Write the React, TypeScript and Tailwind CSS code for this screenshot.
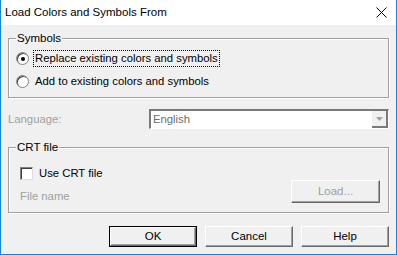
import React from "react"

const font = "font-['Liberation_Sans',Tahoma,sans-serif]"

function GroupBox({ label, className, children }: { label: string; className: string; children: React.ReactNode }) {
  return (
    <div className={`relative border border-[#a0a0a0] shadow-[inset_1px_1px_0_#fff,1px_1px_0_#fff] ${className}`}>
      <span className="absolute left-[7px] top-[-8px] bg-[#f0f0f0] px-[1px] text-[11.5px] leading-[14px] text-black">
        {label}
      </span>
      {children}
    </div>
  )
}

function Radio({ checked }: { checked?: boolean }) {
  return (
    <div className="flex h-[13px] w-[13px] items-center justify-center rounded-full border border-[#808080] bg-white shadow-[inset_1px_1px_0_#404040]">
      {checked && <div className="h-[4px] w-[4px] rounded-full bg-black" />}
    </div>
  )
}

function Button({ label, isDefault, disabled, className = "" }: { label: string; isDefault?: boolean; disabled?: boolean; className?: string }) {
  return (
    <div
      className={`flex items-center justify-center bg-[#f0f0f0] text-[11.5px] ${
        isDefault ? "border border-black" : ""
      } ${disabled ? "text-[#a0a0a0]" : "text-black"} ${className}`}
    >
      <div className="flex h-full w-full items-center justify-center border-t border-l border-t-white border-l-white border-b border-r border-b-[#696969] border-r-[#696969] shadow-[inset_-1px_-1px_0_#a0a0a0]">
        {label}
      </div>
    </div>
  )
}

export default function App() {
  return (
    <div className={`flex h-[255px] w-[397px] flex-col border-x border-b border-[#1883d7] bg-[#f0f0f0] ${font}`}>
      {/* Title bar */}
      <div className="flex h-[25px] items-center justify-between bg-white pl-[4px] pr-[9px]">
        <span className="text-[11.5px] text-black">Load Colors and Symbols From</span>
        <svg width="11" height="11" viewBox="0 0 11 11">
          <path d="M0.5 0.5 L10.5 10.5 M10.5 0.5 L0.5 10.5" stroke="#000" strokeWidth="1" />
        </svg>
      </div>

      <div className="flex flex-col px-[7px]">
        {/* Symbols */}
        <GroupBox label="Symbols" className="mt-[13px] h-[60px]">
          <div className="flex flex-col gap-[6px] pl-[7px] pt-[11px]">
            <div className="flex h-[17px] items-center">
              <Radio checked />
              <span className="ml-[4px] border border-dotted border-black px-[1px] text-[11.3px] leading-[15px] text-black">
                Replace existing colors and symbols
              </span>
            </div>
            <div className="flex h-[17px] items-center">
              <Radio />
              <span className="ml-[6px] text-[11.3px] text-black">Add to existing colors and symbols</span>
            </div>
          </div>
        </GroupBox>

        {/* Language */}
        <div className="mt-[11px] flex h-[20px] items-center">
          <span className="w-[141px] text-[11.3px] text-[#a0a0a0]">Language:</span>
          <div className="flex h-[20px] flex-1 border-t-2 border-l-2 border-t-[#7a7a7a] border-l-[#7a7a7a] border-b border-r border-b-white border-r-white bg-white">
            <span className="flex-1 pl-[2px] text-[11.3px] leading-[17px] text-[#6d6d6d]">English</span>
            <div className="flex w-[16px] items-center justify-center border-b-2 border-r-2 border-b-[#7a7a7a] border-r-[#7a7a7a] bg-[#f0f0f0]">
              <svg width="7" height="4" viewBox="0 0 7 4">
                <path d="M0 0 H7 L3.5 4 Z" fill="#a0a0a0" />
              </svg>
            </div>
          </div>
        </div>

        {/* CRT file */}
        <GroupBox label="CRT file" className="mt-[18px] h-[66px]">
          <div className="flex flex-col pl-[11px] pr-[8px] pt-[19px]">
            <div className="flex h-[13px] items-center">
              <div className="h-[13px] w-[13px] border border-t-[#808080] border-l-[#808080] border-b-[#dcdcdc] border-r-[#dcdcdc] bg-white shadow-[inset_1px_1px_0_#404040]" />
              <span className="ml-[6px] text-[11.3px] text-black">Use CRT file</span>
            </div>
            <div className="flex h-[23px] items-end justify-between">
              <span className="text-[11.3px] leading-[14px] text-[#a0a0a0]">File name</span>
              <Button label="Load..." disabled className="h-[23px] w-[89px]" />
            </div>
          </div>
        </GroupBox>

        {/* Buttons */}
        <div className="mt-[13px] flex justify-end gap-[8px]">
          <Button label="OK" isDefault className="h-[21px] w-[88px]" />
          <Button label="Cancel" className="h-[21px] w-[88px]" />
          <Button label="Help" className="h-[21px] w-[88px]" />
        </div>
      </div>
    </div>
  )
}
